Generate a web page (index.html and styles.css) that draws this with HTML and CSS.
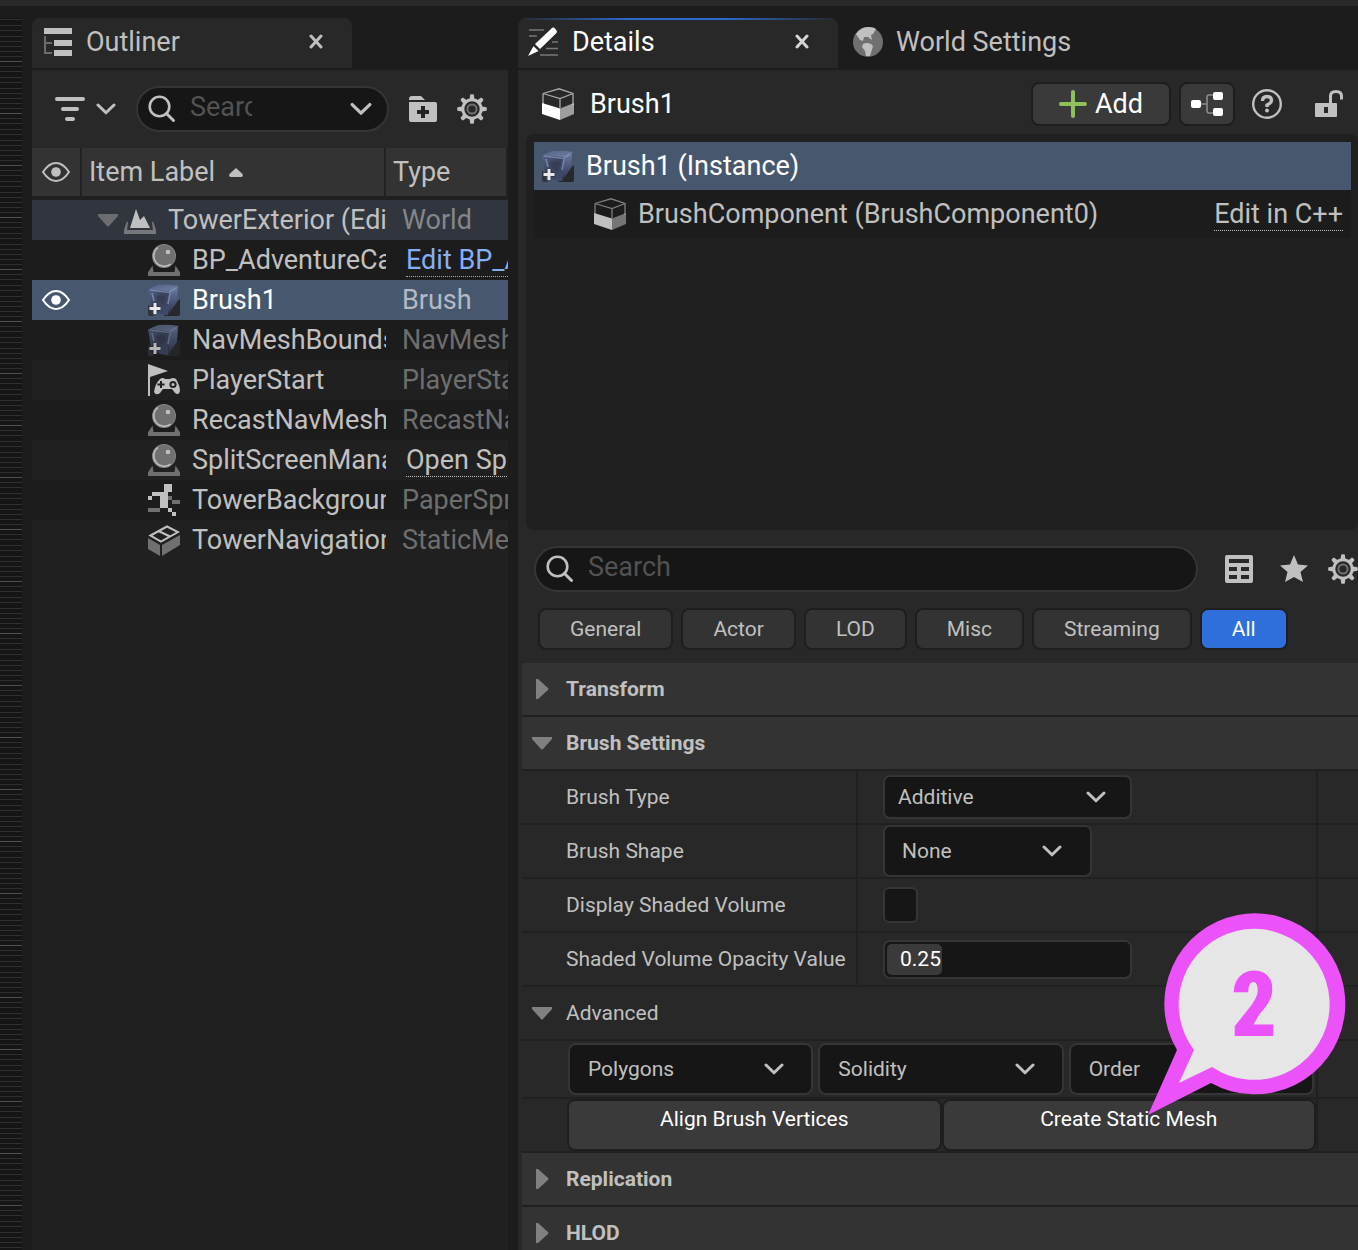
FILE: index.html
```html
<!DOCTYPE html>
<html lang="en">
<head>
<meta charset="utf-8">
<title>Brush1 - Details</title>
<link rel="stylesheet" href="styles.css">
</head>
<body>
<svg class="defs" aria-hidden="true">
  <defs>
    <linearGradient id="stoneTop" x1="0" y1="0" x2="1" y2="1"><stop offset="0" stop-color="#54618a"/><stop offset="1" stop-color="#73829f"/></linearGradient>
    <linearGradient id="stoneFront" x1="0" y1="0" x2="1" y2="1"><stop offset="0" stop-color="#56648c"/><stop offset=".45" stop-color="#3b435c"/><stop offset="1" stop-color="#3f4b70"/></linearGradient>
    <linearGradient id="stoneSide" x1="0" y1="0" x2="0" y2="1"><stop offset="0" stop-color="#6c7ca6"/><stop offset="1" stop-color="#2b324a"/></linearGradient>
  </defs>
  <symbol id="i-chevron" viewBox="0 0 20 12"><path d="M2 2 10 9.800 18 2" fill="none" stroke="currentColor" stroke-width="3" stroke-linecap="round" stroke-linejoin="round"/></symbol>
  <symbol id="i-close" viewBox="0 0 16 16"><path d="M3 2 13 13M13 2 3 13" fill="none" stroke="currentColor" stroke-width="3" stroke-linecap="round"/></symbol>
  <symbol id="i-search" viewBox="0 0 28 28"><circle cx="11.500" cy="11.500" r="9.800" fill="none" stroke="currentColor" stroke-width="2.600"/><path d="M18.500 18.500 25.500 25.500" stroke="currentColor" stroke-width="3" stroke-linecap="round"/></symbol>
  <symbol id="i-eye" viewBox="0 0 30 22"><path d="M2 11Q8 2 15 2T28 11Q22 20 15 20T2 11Z" fill="none" stroke="currentColor" stroke-width="2"/><circle cx="15" cy="11" r="4.800" fill="currentColor"/></symbol>
  <symbol id="i-gear" viewBox="0 0 30 30"><g fill="currentColor"><path id="tooth" d="M12.600 5 13.200.5Q15 -.2 16.800.5L17.400 5Z"/><use href="#tooth" transform="rotate(45 15 15)"/><use href="#tooth" transform="rotate(90 15 15)"/><use href="#tooth" transform="rotate(135 15 15)"/><use href="#tooth" transform="rotate(180 15 15)"/><use href="#tooth" transform="rotate(225 15 15)"/><use href="#tooth" transform="rotate(270 15 15)"/><use href="#tooth" transform="rotate(315 15 15)"/></g><circle cx="15" cy="15" r="9.200" fill="none" stroke="currentColor" stroke-width="3"/><circle cx="15" cy="15" r="4.600" fill="none" stroke="#707070" stroke-width="2"/></symbol>
  <symbol id="i-sphere" viewBox="0 0 32 32"><path d="M0 32V28.500L4.500 21.500 5.500 28H26.500L27.500 21.500 32 28.500V32Z" fill="#707070"/><circle cx="16" cy="12" r="11.400" fill="#707070" stroke="#808080" stroke-width="1.200"/><path d="M10 3.500A10.400 10.400 0 0 0 22.500 20.200" fill="none" stroke="#c0c0c0" stroke-width="1.500"/><circle cx="20" cy="8" r="2.300" fill="#c0c0c0"/></symbol>
  <symbol id="i-stone" viewBox="0 0 32 32"><path d="M24 22 32 15V30Q32 32 30 32H16Z" fill="#26282d"/><path d="M0 20 6 32H2Q0 32 0 30Z" fill="#30343d"/><path d="M1 5 10 1Q20 0 31 2L24 8Z" fill="url(#stoneTop)"/><path d="M0 5 22 7.500 20 31 12 30 3 24Z" fill="url(#stoneFront)"/><path d="M22 7.500 30 2.500 29 18 20 31Z" fill="url(#stoneSide)"/><path d="M2 6 21 8.500 28 4M22 9 20 20M4 9 6 17" fill="none" stroke="#8797bd" stroke-width="1.600" opacity=".7"/><path d="M8 12Q13 10 18 13L16 21 11 18Z" fill="#343b50" opacity=".7"/><path d="M7 19V30M1.500 24.500H12.500" stroke="#22252e" stroke-width="5" opacity=".5"/><path d="M7 19V30M1.500 24.500H12.500" stroke="#e9e9e9" stroke-width="3"/></symbol>
  <symbol id="i-cube" viewBox="0 0 32 32"><path d="M1 5.500 17 .8 31 5.500V17M1 5.500V17M1 5.500 18 10.500 31 5.500M18 10.500V20" fill="none" stroke="currentColor" stroke-width="1.300" opacity=".6"/><path d="M0 15 18 20.500V32L0 26Z" fill="currentColor"/><path d="M18 20.500 32 15V26L18 32Z" fill="currentColor" opacity=".55"/></symbol>
</svg>

<div class="app">
  <div class="menu-edge"></div>
  <div class="workspace">
    <div class="ruler"></div>

    <section class="dock outliner" aria-label="Outliner">
      <div class="tabs">
        <div class="tab">
          <svg class="tab-icon" viewBox="0 0 28 28"><path d="M0 0H28V6H0ZM10 12H28V18H10ZM10 22H28V28H10Z" fill="#c0c0c0"/><path d="M1 8V25H8M1 15H8" fill="none" stroke="#6c6c6c" stroke-width="2"/></svg>
          <span>Outliner</span>
          <button class="icon-btn close" aria-label="Close Outliner"><svg width="16" height="16"><use href="#i-close"/></svg></button>
        </div>
      </div>
      <div class="panel outliner-panel">
        <div class="outliner-tools">
          <button class="icon-btn filter" aria-label="Filters">
            <svg width="30" height="26" viewBox="0 0 30 26"><path d="M2 3H28M8 13H22M12 23H18" stroke="currentColor" stroke-width="4" stroke-linecap="round"/></svg>
            <svg width="20" height="12"><use href="#i-chevron"/></svg>
          </button>
          <div class="search search-small">
            <svg width="28" height="28"><use href="#i-search"/></svg>
            <input type="text" placeholder="Search" aria-label="Search outliner">
            <button class="icon-btn" aria-label="Search history"><svg width="22" height="14"><use href="#i-chevron"/></svg></button>
          </div>
          <button class="icon-btn" aria-label="New folder"><svg width="28" height="26" viewBox="0 0 28 26"><path d="M0 3Q0 0 3 0H12L16 4H0ZM0 6H26Q28 6 28 8V24Q28 26 26 26H2Q0 26 0 24Z" fill="currentColor"/><path d="M14 10V22M8 16H20" stroke="#242424" stroke-width="4"/></svg></button>
          <button class="icon-btn" aria-label="Outliner settings"><svg width="30" height="30"><use href="#i-gear"/></svg></button>
        </div>
        <table class="tree">
          <colgroup><col class="col-eye"><col class="col-label"><col class="col-type"></colgroup>
          <thead>
            <tr>
              <th class="eye" aria-label="Visibility"><svg width="30" height="22"><use href="#i-eye"/></svg></th>
              <th>Item Label <svg class="sort" width="14" height="9" viewBox="0 0 14 9"><path d="M7 0 13.500 6Q14.500 9 12 9H2Q-.5 9 .5 6Z" fill="currentColor"/></svg></th>
              <th>Type</th>
            </tr>
          </thead>
          <tbody>
            <tr class="world"><td></td><td><div class="item root"><svg width="20" height="13" viewBox="0 0 20 13"><path d="M0 0H20V2L11 12Q10 13 9 12L0 2Z" fill="#6c6d70"/></svg><svg width="32" height="32" viewBox="0 0 32 32"><path d="M6 24 12 5 16 16 20 12 26 24Z" fill="#c0c0c0"/><path d="M0 30V26L3 17 4 19 3 26H29L28 19 29 17 32 26V30Z" fill="#75777b"/></svg><span>TowerExterior (Editor)</span></div></td><td>World</td></tr>
            <tr><td></td><td><div class="item"><svg width="32" height="32"><use href="#i-sphere"/></svg><span>BP_AdventureCamera</span></div></td><td class="linked"><a class="blue" href="#bp">Edit BP_Adventure</a></td></tr>
            <tr class="selected"><td class="eye"><svg width="30" height="22"><use href="#i-eye"/></svg></td><td><div class="item"><svg width="32" height="32"><use href="#i-stone"/></svg><span>Brush1</span></div></td><td>Brush</td></tr>
            <tr><td></td><td><div class="item"><svg class="dim" width="32" height="32"><use href="#i-stone"/></svg><span>NavMeshBounds0</span></div></td><td>NavMesh</td></tr>
            <tr class="alt"><td></td><td><div class="item"><svg width="32" height="32" viewBox="0 0 32 32"><path d="M0 0 20 7 2 13V32H0Z" fill="#c0c0c0"/><path d="M12 15Q15 13 17 15H22Q25 13 28 15Q32 22 32 27Q31 32 27 29L24 25H15L12 29Q8 32 6 28Q7 20 12 15Z" fill="#c0c0c0"/><path d="M13 17V24M9.500 20.500H16.500" stroke="#1f1f1f" stroke-width="2"/><circle cx="25" cy="20.500" r="2.600" fill="none" stroke="#1f1f1f" stroke-width="2"/></svg><span>PlayerStart</span></div></td><td>PlayerStart</td></tr>
            <tr><td></td><td><div class="item"><svg width="32" height="32"><use href="#i-sphere"/></svg><span>RecastNavMesh</span></div></td><td>RecastNav</td></tr>
            <tr class="alt"><td></td><td><div class="item"><svg width="32" height="32"><use href="#i-sphere"/></svg><span>SplitScreenManager</span></div></td><td class="linked"><a href="#split">Open Split</a></td></tr>
            <tr><td></td><td><div class="item"><svg width="32" height="32" viewBox="0 0 32 32" shape-rendering="crispEdges"><path d="M20 12H24V16H32V20H24V16H20ZM0 24H12V28H0Z" fill="#707070"/><path d="M16 0H24V8H20V24H24V28H28V32H24V28H20V24H12V12H4V16H0V12H4V8H16Z" fill="#c0c0c0"/></svg><span>TowerBackground</span></div></td><td>PaperSprite</td></tr>
            <tr class="alt"><td></td><td><div class="item"><svg width="32" height="32" viewBox="0 0 32 32"><path d="M0 14 12 21V32L0 25ZM14 21 32 11V21L14 32Z" fill="#707070"/><path d="M2.500 11.500 19 2.500 30 8 13 17.500ZM10.500 7 22 12.500" fill="none" stroke="#c0c0c0" stroke-width="2"/></svg><span>TowerNavigation</span></div></td><td>StaticMesh</td></tr>
          </tbody>
        </table>
      </div>
    </section>

    <section class="dock details" aria-label="Details">
      <div class="tabs">
        <div class="tab active">
          <svg class="details-icon" width="32" height="30" viewBox="0 0 32 30"><path d="M1 3H16M1 9H9M24 15H30M18 21.500H30M12 28H30" stroke="#777" stroke-width="1.600"/><path d="M23 2Q25 -.5 27 1.500L28.500 3.500Q29.500 5 28 6.500L12 22 7 17ZM5.500 19 10.500 24 0 29Z" fill="#fff"/></svg>
          <span>Details</span>
          <button class="icon-btn close" aria-label="Close Details"><svg width="16" height="16"><use href="#i-close"/></svg></button>
        </div>
        <div class="tab inactive">
          <svg width="30" height="30" viewBox="0 0 30 30"><circle cx="15" cy="15" r="15" fill="#707070"/><path d="M3 7Q8 0 15 0Q21 0 23 2L20 7 18 8 19 13 15 10 11 10 10 14 7 13ZM10 17Q14 15 18 17L20 19 17 29H13L12 24 9 20Z" fill="#c0c0c0"/></svg>
          <span>World Settings</span>
        </div>
      </div>
      <div class="panel details-panel">
        <header class="object-bar">
          <svg class="white" width="32" height="32"><use href="#i-cube"/></svg>
          <h1>Brush1</h1>
          <button class="tool add"><svg width="28" height="28" viewBox="0 0 28 28"><path d="M14 2V26M2 14H26" stroke="#8fc05a" stroke-width="4" stroke-linecap="round"/></svg>Add</button>
          <button class="tool" aria-label="Edit hierarchy"><svg width="32" height="26" viewBox="0 0 32 26"><path d="M8 13H16M24 4H18Q16 4 16 6V20Q16 22 18 22H24" fill="none" stroke="#8c8c8c" stroke-width="1.600"/><g fill="#fff"><rect y="9" width="10" height="8" rx="2"/><rect x="22" y="1" width="10" height="8" rx="2"/><rect x="22" y="17" width="10" height="8" rx="2"/></g></svg></button>
          <button class="icon-btn help" aria-label="Help"><svg width="30" height="30" viewBox="0 0 30 30"><circle cx="15" cy="15" r="13.800" fill="none" stroke="currentColor" stroke-width="2.400"/><path d="M10.500 12Q10.500 7.500 15 7.500T19.500 11.500Q19.500 14 15 16V18" fill="none" stroke="currentColor" stroke-width="3.400"/><circle cx="15" cy="21.500" r="2" fill="currentColor"/></svg></button>
          <button class="icon-btn lock" aria-label="Lock"><svg width="28" height="28" viewBox="0 0 28 28"><path d="M15.500 14V6Q15.500 1.500 21 1.500T26.500 6V9.500" fill="none" stroke="currentColor" stroke-width="3"/><path d="M1 13H21Q22 13 22 14V26Q22 27 21 27H1Q0 27 0 26V14Q0 13 1 13ZM9 17V23H13V17Z" fill="currentColor" fill-rule="evenodd"/></svg></button>
        </header>

        <div class="components">
          <div class="component selected"><svg width="32" height="32"><use href="#i-stone"/></svg><span>Brush1 (Instance)</span></div>
          <div class="component child"><svg width="32" height="32"><use href="#i-cube"/></svg><span>BrushComponent (BrushComponent0)</span><a href="#cpp">Edit in C++</a></div>
        </div>

        <div class="find-row">
          <div class="search">
            <svg width="28" height="28"><use href="#i-search"/></svg>
            <input type="text" placeholder="Search" aria-label="Search details">
          </div>
          <button class="icon-btn grid-btn" aria-label="Property matrix"><svg width="28" height="28" viewBox="0 0 28 28"><path d="M2 0H26Q28 0 28 2V26Q28 28 26 28H2Q0 28 0 26V2Q0 0 2 0ZM4 4V8H24V4ZM4 12V16H12V12ZM16 12V16H24V12ZM4 20V24H12V20ZM16 20V24H24V20Z" fill="currentColor" fill-rule="evenodd"/></svg></button>
          <button class="icon-btn" aria-label="Favorites"><svg width="28" height="28" viewBox="0 0 28 28"><path d="M14 0 18 9.500 28 10.500 20.500 17 23 27 14 22 5 27 7.500 17 0 10.500 10 9.500Z" fill="currentColor"/></svg></button>
          <button class="icon-btn" aria-label="Details settings"><svg width="30" height="30"><use href="#i-gear"/></svg></button>
        </div>

        <div class="filters">
          <button>General</button><button>Actor</button><button>LOD</button><button>Misc</button><button>Streaming</button><button class="on">All</button>
        </div>

        <div class="props">
          <h2 class="cat"><svg width="14" height="20" viewBox="0 0 14 20"><path d="M0 0H2L12 9Q13 10 12 11L2 20H0Z" fill="#808080"/></svg>Transform</h2>
          <h2 class="cat"><svg class="open" width="20" height="13" viewBox="0 0 20 13"><path d="M0 0H20V2L11 12Q10 13 9 12L0 2Z" fill="#808080"/></svg>Brush Settings</h2>
          <div class="prop">
            <label for="type">Brush Type</label>
            <div class="value"><div class="combo combo-type"><select id="type"><option>Additive</option><option>Subtractive</option></select><svg width="20" height="12"><use href="#i-chevron"/></svg></div></div>
          </div>
          <div class="prop">
            <label for="shape">Brush Shape</label>
            <div class="value"><div class="combo combo-shape"><select id="shape"><option>None</option><option>Cube</option></select><svg width="20" height="12"><use href="#i-chevron"/></svg></div></div>
          </div>
          <div class="prop">
            <label for="shaded">Display Shaded Volume</label>
            <div class="value"><input type="checkbox" id="shaded"></div>
          </div>
          <div class="prop">
            <label for="opacity">Shaded Volume Opacity Value</label>
            <div class="value"><div class="spin"><div class="fill" style="width:25%"></div><input type="text" id="opacity" value="0.25"></div></div>
          </div>
          <h3 class="cat sub"><svg class="open" width="20" height="13" viewBox="0 0 20 13"><path d="M0 0H20V2L11 12Q10 13 9 12L0 2Z" fill="#808080"/></svg>Advanced</h3>
          <div class="wide menus">
            <div class="cells">
              <button class="menu-btn">Polygons<svg width="20" height="12"><use href="#i-chevron"/></svg></button>
              <button class="menu-btn">Solidity<svg width="20" height="12"><use href="#i-chevron"/></svg></button>
              <button class="menu-btn">Order<svg width="20" height="12"><use href="#i-chevron"/></svg></button>
            </div>
          </div>
          <div class="wide actions">
            <div class="cells">
              <button>Align Brush Vertices</button>
              <button>Create Static Mesh</button>
            </div>
          </div>
          <h2 class="cat"><svg width="14" height="20" viewBox="0 0 14 20"><path d="M0 0H2L12 9Q13 10 12 11L2 20H0Z" fill="#808080"/></svg>Replication</h2>
          <h2 class="cat"><svg width="14" height="20" viewBox="0 0 14 20"><path d="M0 0H2L12 9Q13 10 12 11L2 20H0Z" fill="#808080"/></svg>HLOD</h2>
          <div class="callout">
            <svg width="200" height="206" viewBox="0 0 200 206"><path d="M0 202 29 137A90.500 90.500 0 1 1 63 170Z" fill="#ec52fa"/><path d="M31 170 46 137A75.500 75.500 0 1 1 64 154Z" fill="#e6e6e6"/></svg>
            <span>2</span>
          </div>
        </div>
      </div>
    </section>
  </div>
</div>
</body>
</html>
```
FILE: styles.css
```css
* { box-sizing: border-box; }

body {
  margin: 0;
  background: #1c1c1c;
  color: #c0c0c0;
  font: 27px/32px Roboto, "Liberation Sans", sans-serif;
}

button, input, select { font: inherit; color: inherit; margin: 0; }
h1, h2, h3 { margin: 0; font-weight: 400; font-size: inherit; }
svg { display: block; flex: none; }
.defs { position: absolute; width: 0; height: 0; }

.app { height: 100vh; display: flex; flex-direction: column; overflow: hidden; }
.menu-edge { height: 6px; flex: none; background: #292929; }

.workspace {
  flex: 1;
  min-height: 0;
  padding-top: 12px;
  display: grid;
  grid-template-columns: 22px minmax(0, 476fr) minmax(0, 840fr);
  column-gap: 10px;
}

/* Viewport ruler: ten ticks to a 52px step, the first one brighter */
.ruler {
  background-color: #151515;
  background-position: 0 -9px;
  background-image: repeating-linear-gradient(
    #505050 0 1px, transparent 1px 5px, #2f2f2f 5px 6px, transparent 6px 10px,
    #2f2f2f 10px 11px, transparent 11px 16px, #2f2f2f 16px 17px, transparent 17px 21px,
    #2f2f2f 21px 22px, transparent 22px 27px, #2f2f2f 27px 28px, transparent 28px 32px,
    #2f2f2f 32px 33px, transparent 33px 37px, #2f2f2f 37px 38px, transparent 38px 42px,
    #2f2f2f 42px 43px, transparent 43px 47px, #2f2f2f 47px 48px, transparent 48px 52px);
  background-size: 100% 2080px;
}

.dock { display: flex; flex-direction: column; min-height: 0; }
.tabs { display: flex; height: 52px; flex: none; }
.tab {
  width: 320px;
  height: 50px;
  padding: 0 28px 3px 12px;
  display: flex;
  align-items: center;
  border-radius: 8px 8px 0 0;
  background: #282828;
}
.tab-icon { width: 28px; height: 28px; margin-right: 14px; }
.tab .close { margin-left: auto; }
.tab.active {
  padding: 0 28px 3px 10px;
  color: #fff;
  background: linear-gradient(90deg, #282828, #2b69cf 35% 65%, #282828) 0 0 / 100% 2px no-repeat #282828;
}
.tab.active .close { color: #d5d5d5; }
.details-icon { margin-right: 12px; }
.tab.inactive { background: none; padding: 0 0 3px 15px; gap: 13px; white-space: nowrap; }

.icon-btn {
  display: flex;
  align-items: center;
  padding: 0;
  border: 0;
  background: none;
}

.panel { flex: 1; min-height: 0; background: #282828; }
.outliner-panel { background: #202020; }

.outliner-tools {
  height: 78px;
  padding: 0 21px 0 23px;
  display: flex;
  align-items: center;
  gap: 20px;
  background: #282828;
}
.filter { gap: 11px; }

.search {
  flex: 1;
  min-width: 0;
  height: 46px;
  padding: 0 16px 0 10px;
  display: flex;
  align-items: center;
  gap: 14px;
  border: 2px solid #353535;
  border-radius: 23px;
  background: #161616;
}
.search input {
  flex: 1;
  min-width: 0;
  height: 36px;
  padding: 0 0 4px;
  border: 0;
  outline: 0;
  background: none;
}
.search input::placeholder { color: #525252; opacity: 1; }
.search-small input { flex: 0 1 62px; }
.search-small .icon-btn { margin-left: auto; }
.search-small { padding-right: 15px; }

.tree { width: 100%; table-layout: fixed; border-collapse: separate; border-spacing: 0; }
.col-eye { width: 50px; }
.col-label { width: 304px; }
.tree th {
  height: 52px;
  padding: 0 0 0 7px;
  text-align: left;
  font-weight: 400;
  background: #333;
  border-right: 2px solid #222;
  border-bottom: 4px solid #202020;
  white-space: nowrap;
}
.tree th.eye { padding-left: 9px; }
.sort { display: inline-block; margin-left: 7px; vertical-align: 4px; }
.tree td {
  height: 40px;
  padding: 0 0 0 16px;
  overflow: hidden;
  white-space: nowrap;
  background: #1c1c1c;
  color: #6e6e6e;
}
.tree td:first-child { padding-left: 9px; }
.tree td:nth-child(2) { padding: 0; color: #c0c0c0; }
.item { display: flex; align-items: center; gap: 12px; margin-left: 66px; overflow: hidden; }
.item.root { margin-left: 16px; }
.item.root svg:first-child { margin-right: -6px; }
.item span { flex: 1; min-width: 0; overflow: hidden; }
.dim { opacity: .75; }
.tree .alt td { background: #202020; }
.tree .world td { background: #31353d; color: #84868a; }
.tree .world td:nth-child(2) { color: #c0c0c0; }
.tree .selected td { background: #47586e; color: #b3bac4; }
.tree .selected td:first-child, .tree .selected td:nth-child(2) { color: #fff; }
.tree td.linked { padding-left: 20px; }
a { color: #c0c0c0; text-decoration: none; border-bottom: 1px dotted currentColor; }
a.blue { color: #86aef5; }

.object-bar {
  height: 64px;
  padding: 4px 15px 0 24px;
  display: flex;
  align-items: center;
  color: #c0c0c0;
}
.white, .object-bar h1 { color: #fff; }
.object-bar h1 { margin: 0 auto 0 16px; }
.tool {
  height: 44px;
  padding: 0 10px;
  display: flex;
  align-items: center;
  justify-content: center;
  gap: 8px;
  border: 2px solid #1e1e1e;
  border-radius: 8px;
  background: #3a3a3a;
  color: #fff;
  margin-left: 8px;
}
.add { padding: 0 26px; }
.help { margin-left: 17px; }
.lock { margin-left: 33px; }

.components {
  height: 396px;
  margin-left: 8px;
  padding: 8px 7px 0 8px;
  border-radius: 8px;
  background: #202020;
}
.component { height: 48px; padding: 0 8px; display: flex; align-items: center; gap: 12px; background: #1c1c1c; white-space: nowrap; }
.component.selected { background: #47586e; color: #fff; }
.component.child { padding-left: 60px; }
.component a { margin-left: auto; }

.find-row { padding: 16px 0 0 16px; display: flex; align-items: center; gap: 20px; }
.grid-btn { padding: 0 7px; }

.filters { padding: 16px 0 13px 20px; display: flex; gap: 8px; font-size: 21px; line-height: 24px; }
.filters button {
  height: 42px;
  padding: 0 30px;
  border: 2px solid #1e1e1e;
  border-radius: 8px;
  background: #333;
}
.filters .on { background: #2f6fdb; color: #fff; }

.props { position: relative; margin-left: 4px; font-size: 21px; line-height: 24px; }
.cat {
  height: 54px;
  padding: 0 0 0 14px;
  display: flex;
  align-items: center;
  gap: 16px;
  border-bottom: 2px solid #202020;
  background: #333;
  font-size: 21px;
  font-weight: 700;
}
.cat .open { margin: 0 -2px 0 -4px; }
.cat.sub { background: none; font-weight: 400; }

.prop {
  height: 54px;
  display: grid;
  grid-template-columns: minmax(0, 336fr) minmax(0, 460fr) 40px;
  border-bottom: 2px solid #202020;
}
.prop label { padding-left: 44px; border-right: 2px solid #202020; line-height: 52px; white-space: nowrap; }
.value { padding-left: 25px; display: flex; align-items: center; border-right: 2px solid #202020; }

.combo { display: grid; align-items: center; }
.combo select, .combo svg { grid-area: 1 / 1; }
.combo svg { justify-self: end; pointer-events: none; }
.combo select {
  width: 100%;
  height: 44px;
  padding: 0 13px;
  appearance: none;
  border: 2px solid #353535;
  border-radius: 7px;
  background: #161616;
}
.combo-type { width: 249px; }
.combo-type svg { margin-right: 26px; }
.combo-shape { width: 209px; }
.combo-shape svg { margin-right: 30px; }
.combo-shape select { height: 52px; padding: 0 17px; }

.value input[type="checkbox"] {
  width: 35px;
  height: 36px;
  appearance: none;
  border: 2px solid #353535;
  border-radius: 6px;
  background: #161616;
}
.spin {
  width: 249px;
  height: 39px;
  padding: 2px;
  display: grid;
  border: 2px solid #353535;
  border-radius: 7px;
  background: #161616;
}
.spin .fill, .spin input { grid-area: 1 / 1; }
.spin .fill { max-width: 55px; border-radius: 5px; background: #3a3a3a; }
.spin input { min-width: 0; height: 31px; padding: 0 13px; border: 0; outline: 0; background: none; color: #fff; }

.wide { padding: 0 40px 0 45px; border-bottom: 2px solid #202020; }
.cells { height: 100%; display: grid; grid-auto-flow: column; grid-auto-columns: minmax(0, 1fr); align-items: center; border-right: 2px solid #202020; }
.menus { height: 58px; }
.menus .cells { gap: 5px; padding: 0 2px 0 1px; }
.menu-btn {
  height: 52px;
  padding: 0 27px 0 18px;
  display: flex;
  align-items: center;
  justify-content: space-between;
  border: 2px solid #353535;
  border-radius: 8px;
  background: #161616;
}
.actions { height: 54px; }
.actions button {
  height: 52px;
  padding: 0 0 12px;
  border: 2px solid #1e1e1e;
  border-radius: 8px;
  background: #3a3a3a;
  color: #fff;
}

/* Numbered step marker floating over the properties */
.callout { position: absolute; right: 10px; top: 250px; pointer-events: none; }
.callout span {
  position: absolute;
  left: 12px;
  right: 0;
  top: 43px;
  text-align: center;
  font: 900 90px/100px Impact, "Roboto Condensed", "Open Sans Condensed", Roboto, sans-serif;
  color: #ec52fa;
}
```
